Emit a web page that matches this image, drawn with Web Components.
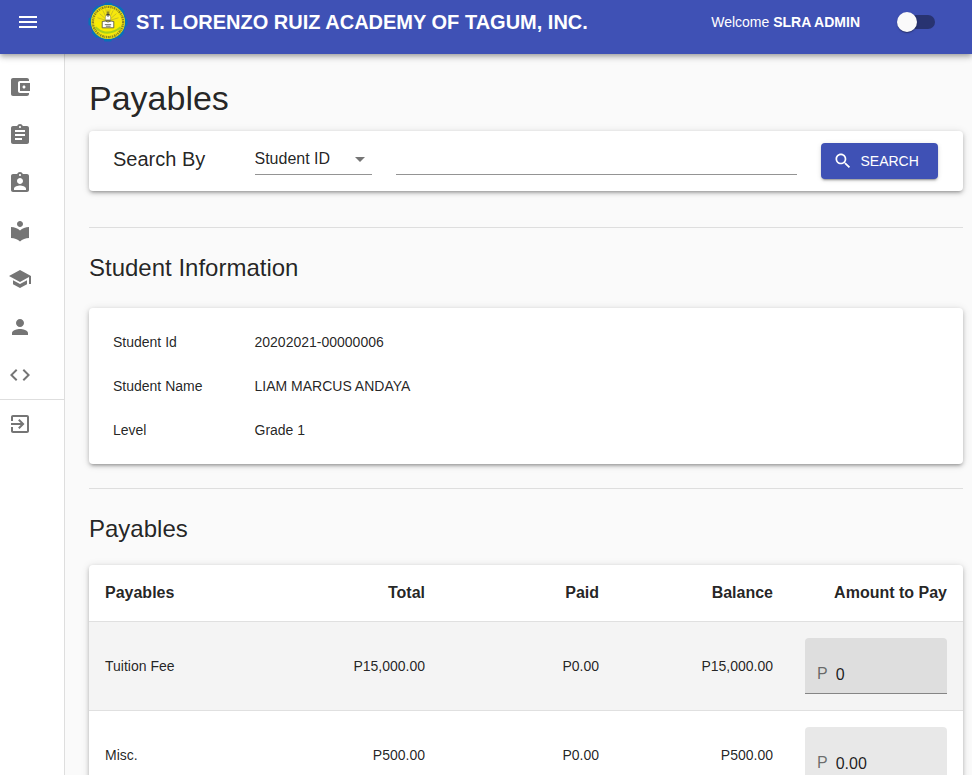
<!DOCTYPE html>
<html lang="en">
<head>
<meta charset="utf-8">
<meta name="viewport" content="width=device-width, initial-scale=1">
<title>Payables</title>
<style>
html { scrollbar-width: none; }
body { margin: 0; background: #fafafa; color: rgba(0,0,0,.87); font: 14px/20px "Liberation Sans", Arial, sans-serif; }
</style>
</head>
<body>
<school-app></school-app>

<template id="t-app">
<style>
:host { display: flex; flex-direction: column; min-height: 100vh; }
app-header { position: sticky; top: 0; z-index: 2; }
.body { display: flex; flex: 1; }
main { flex: 1; min-width: 0; padding: 24px 9px 24px 24px; }
h1 { margin: 0 0 12px; font-size: 34px; line-height: 41px; font-weight: 400; }
h2 { margin: 24px 0; font-size: 24px; line-height: 32px; font-weight: 400; }
h2.table-title { margin-bottom: 20px; }
hr { margin: 24px 0; border: 0; height: 1px; background: #dedede; }
hr.wide { margin-top: 36px; }
</style>
<app-header user="SLRA ADMIN">ST. LORENZO RUIZ ACADEMY OF TAGUM, INC.</app-header>
<div class="body">
  <side-nav></side-nav>
  <main>
    <h1>Payables</h1>
    <paper-card><search-form></search-form></paper-card>
    <hr class="wide">
    <h2>Student Information</h2>
    <paper-card><student-info></student-info></paper-card>
    <hr>
    <h2 class="table-title">Payables</h2>
    <paper-card><payables-table></payables-table></paper-card>
  </main>
</div>
</template>

<template id="t-header">
<style>
:host { display: flex; align-items: center; box-sizing: border-box; min-height: 54px; padding: 0 37px 10px 16px; background: #3f51b5; color: #fff;
  box-shadow: 0 2px 4px -1px rgba(0,0,0,.2), 0 4px 5px rgba(0,0,0,.14), 0 1px 10px rgba(0,0,0,.12); }
button { border: 0; padding: 0; margin-right: 48px; background: none; color: inherit; display: flex; cursor: pointer; }
school-crest { margin-right: 8px; }
.title { flex: 1; font-size: 20px; line-height: 32px; font-weight: 700; white-space: nowrap; }
.welcome { margin-right: 37px; white-space: nowrap; }
input { appearance: none; position: relative; flex: none; margin: 0; width: 38px; height: 20px; cursor: pointer; }
input::before { content: ""; position: absolute; left: 4px; right: 0; top: 3px; height: 14px; border-radius: 7px; background: #283371; }
input::after { content: ""; position: absolute; left: 0; top: 0; width: 20px; height: 20px; border-radius: 50%; background: #fafafa;
  box-shadow: 0 2px 1px -1px rgba(0,0,0,.2), 0 1px 1px rgba(0,0,0,.14), 0 1px 3px rgba(0,0,0,.12); }
input:checked::after { left: 18px; }
</style>
<button type="button" aria-label="Open menu"><ui-icon name="menu"></ui-icon></button>
<school-crest></school-crest>
<span class="title"><slot></slot></span>
<span class="welcome">Welcome <b></b></span>
<input type="checkbox" role="switch" aria-label="Dark mode">
</template>

<template id="t-crest">
<style>:host { display: block; width: 40px; height: 40px; flex: none; } svg { display: block; }</style>
<svg width="40" height="40" viewBox="-19 -19 38 38" aria-hidden="true">
  <circle r="17.4" fill="#0871b8"/>
  <circle r="17.4" fill="none" stroke="#0871b8" stroke-width="2.4" stroke-dasharray="7 6.66" stroke-dashoffset="3.5"/>
  <circle r="16.2" fill="#f2e514"/>
  <circle r="14.4" fill="none" stroke="#8d861c" stroke-width="2.2" stroke-dasharray="1.3 .7 .8 .6 1.6 .8"/>
  <circle r="12.4" fill="#f7e80c"/>
  <g stroke="#b9b02c" stroke-width=".7">
    <path d="M0-1L-5-11M0-1L-8-8M0-1L-10-4M0-1L5-11M0-1L8-8M0-1L10-4M0-1V-12M0-1L-2-12M0-1L2-12"/>
  </g>
  <path d="M-12 2C-8-2 -4-1 0 0S8-2 12 2C10 9 5 12 0 12S-10 9-12 2z" fill="#f9ed00"/>
  <path d="M-12 5Q-8 9-3 10Q5 11 12 5" fill="none" stroke="#a6cf1e" stroke-width="2"/>
  <path d="M-2.5-2V-5L0-8L2.5-5V-2z" fill="#fff" stroke="#84813b" stroke-width=".5"/>
  <path d="M0-10V-5M-1.5-7H1.5" stroke="#41413a" stroke-width="1"/>
  <path d="M-5.5-.5Q-2.5-1.5 0 0Q3-1.5 5.5-.5V5.5H-5.5z" fill="#fff" stroke="#51513d" stroke-width=".8"/>
  <path d="M-3 2.5H3M-2 4H2.5M-2.5-1.5H2.5" stroke="#6a695b" stroke-width=".9"/>
</svg>
</template>

<template id="t-nav">
<style>
:host { display: block; flex: none; box-sizing: border-box; width: 65px; padding-top: 9px; background: #fff; border-right: 1px solid #dedede; color: #757575; }
nav { display: flex; flex-direction: column; position: sticky; top: 63px; }
a { display: flex; align-items: center; height: 48px; padding-left: 8px; color: inherit; }
hr { width: 100%; margin: 0; border: 0; height: 1px; background: #dedede; }
</style>
<nav aria-label="Main">
  <a href="#payments" aria-label="Payments"><ui-icon name="wallet"></ui-icon></a>
  <a href="#assessments" aria-label="Assessments"><ui-icon name="assignment"></ui-icon></a>
  <a href="#enrollment" aria-label="Enrollment"><ui-icon name="assignmentInd"></ui-icon></a>
  <a href="#subjects" aria-label="Subjects"><ui-icon name="library"></ui-icon></a>
  <a href="#students" aria-label="Students"><ui-icon name="school"></ui-icon></a>
  <a href="#users" aria-label="Users"><ui-icon name="person"></ui-icon></a>
  <a href="#developer" aria-label="Developer"><ui-icon name="code"></ui-icon></a>
  <hr>
  <a href="#logout" aria-label="Log out"><ui-icon name="exit"></ui-icon></a>
</nav>
</template>

<template id="t-card">
<style>
:host { display: block; background: #fff; border-radius: 4px; overflow: hidden;
  box-shadow: 0 3px 3px -2px rgba(0,0,0,.2), 0 2px 4px rgba(0,0,0,.2), 0 1px 8px rgba(0,0,0,.12); }
</style><slot></slot>
</template>

<template id="t-search">
<style>
:host { display: block; padding: 12px 25px 12px 24px; }
form { display: grid; grid-template-columns: repeat(12, minmax(0, 1fr)); column-gap: 24px; align-items: start; }
label { grid-column: span 2; font-size: 20px; line-height: 32px; white-space: nowrap; }
.pick { grid-column: span 2; display: grid; align-items: center; }
.pick > * { grid-area: 1 / 1; }
.pick ui-icon { justify-self: end; color: #757575; pointer-events: none; }
select, input { appearance: none; box-sizing: border-box; width: 100%; height: 32px; margin: 0; padding: 0; border: 0; border-bottom: 1px solid #949494; border-radius: 0; background: none; color: inherit; font: inherit; font-size: 16px; outline: 0; }
input { grid-column: span 6; }
button { grid-column: span 2; display: flex; align-items: center; gap: 8px; height: 36px; padding: 0 12px; border: 0; border-radius: 4px; background: #3f51b5; color: #fff; font: inherit; cursor: pointer;
  box-shadow: 0 3px 1px -2px rgba(0,0,0,.2), 0 2px 2px rgba(0,0,0,.14), 0 1px 5px rgba(0,0,0,.12); }
button ui-icon { --size: 20px; }
</style>
<form>
  <label for="by">Search By</label>
  <div class="pick">
    <select id="by"><option>Student ID</option><option>Name</option></select>
    <ui-icon name="drop"></ui-icon>
  </div>
  <input type="text" aria-label="Search text">
  <button type="button"><ui-icon name="search"></ui-icon>SEARCH</button>
</form>
</template>

<template id="t-info">
<style>
:host { display: block; padding: 24px 25px 24px 24px; }
dl { display: grid; grid-template-columns: repeat(12, minmax(0, 1fr)); gap: 24px; margin: 0; }
dt { grid-column: span 2; white-space: nowrap; }
dd { grid-column: span 10; margin: 0; }
</style>
<dl>
  <dt>Student Id</dt><dd>20202021-00000006</dd>
  <dt>Student Name</dt><dd>LIAM MARCUS ANDAYA</dd>
  <dt>Level</dt><dd>Grade 1</dd>
</dl>
</template>

<template id="t-table">
<style>
:host { display: block; }
table { width: 100%; table-layout: fixed; border-collapse: separate; border-spacing: 0; }
col.num { width: 174px; }
th, td { padding: 16px; border-bottom: 1px solid #e0e0e0; text-align: right; }
th { font-size: 16px; line-height: 24px; font-weight: 700; white-space: nowrap; }
th:first-child, td:first-child { text-align: left; }
tr.active { background: #f4f4f4; }
</style>
<table>
  <colgroup><col><col class="num"><col class="num"><col class="num"><col class="num"></colgroup>
  <thead><tr><th scope="col">Payables</th><th scope="col">Total</th><th scope="col">Paid</th><th scope="col">Balance</th><th scope="col">Amount to Pay</th></tr></thead>
  <tbody>
    <tr class="active"><td>Tuition Fee</td><td>P15,000.00</td><td>P0.00</td><td>P15,000.00</td><td><amount-field label="Tuition Fee amount" value="0"></amount-field></td></tr>
    <tr><td>Misc.</td><td>P500.00</td><td>P0.00</td><td>P500.00</td><td><amount-field label="Misc. amount" value="0.00"></amount-field></td></tr>
  </tbody>
</table>
</template>

<template id="t-amount">
<style>
:host { display: flex; box-sizing: border-box; height: 56px; padding: 25px 12px 9px; gap: 8px; background: rgba(0,0,0,.09); border-bottom: 1px solid #858585; border-radius: 4px 4px 0 0; font-size: 16px; line-height: 21px; }
label { color: rgba(0,0,0,.54); }
input { flex: 1; min-width: 0; width: 0; margin: 0; padding: 1px 0 0; border: 0; background: none; color: inherit; font: inherit; outline: 0; }
</style>
<label for="amount">P</label><input id="amount" type="text" inputmode="decimal">
</template>

<script>
const ICONS = {
  menu: 'M3 18h18v-2H3v2zm0-5h18v-2H3v2zm0-7v2h18V6H3z',
  wallet: 'M21 18v1c0 1.1-.9 2-2 2H5c-1.11 0-2-.9-2-2V5c0-1.1.89-2 2-2h14c1.1 0 2 .9 2 2v1h-9c-1.11 0-2 .9-2 2v8c0 1.1.89 2 2 2h9zm-9-2h10V8H12v8zm4-2.5c-.83 0-1.5-.67-1.5-1.5s.67-1.5 1.5-1.5 1.5.67 1.5 1.5-.67 1.5-1.5 1.5z',
  assignment: 'M19 3h-4.18C14.4 1.84 13.3 1 12 1c-1.3 0-2.4.84-2.82 2H5c-1.1 0-2 .9-2 2v14c0 1.1.9 2 2 2h14c1.1 0 2-.9 2-2V5c0-1.1-.9-2-2-2zm-7 0c.55 0 1 .45 1 1s-.45 1-1 1-1-.45-1-1 .45-1 1-1zm2 14H7v-2h7v2zm3-4H7v-2h10v2zm0-4H7V7h10v2z',
  assignmentInd: 'M19 3h-4.18C14.4 1.84 13.3 1 12 1c-1.3 0-2.4.84-2.82 2H5c-1.1 0-2 .9-2 2v14c0 1.1.9 2 2 2h14c1.1 0 2-.9 2-2V5c0-1.1-.9-2-2-2zm-7 0c.55 0 1 .45 1 1s-.45 1-1 1-1-.45-1-1 .45-1 1-1zm0 4c1.66 0 3 1.34 3 3s-1.34 3-3 3-3-1.34-3-3 1.34-3 3-3zm6 12H6v-1.4c0-2 4-3.1 6-3.1s6 1.1 6 3.1V19z',
  library: 'M12 11.55C9.64 9.35 6.48 8 3 8v11c3.48 0 6.64 1.35 9 3.55 2.36-2.19 5.52-3.55 9-3.55V8c-3.48 0-6.64 1.35-9 3.55zM12 8c1.66 0 3-1.34 3-3s-1.34-3-3-3-3 1.34-3 3 1.34 3 3 3z',
  school: 'M5 13.18v4L12 21l7-3.82v-4L12 17l-7-3.82zM12 3L1 9l11 6 9-4.91V17h2V9L12 3z',
  person: 'M12 12c2.21 0 4-1.79 4-4s-1.79-4-4-4-4 1.79-4 4 1.79 4 4 4zm0 2c-2.67 0-8 1.34-8 4v2h16v-2c0-2.66-5.33-4-8-4z',
  code: 'M9.4 16.6L4.8 12l4.6-4.6L8 6l-6 6 6 6 1.4-1.4zm5.2 0l4.6-4.6-4.6-4.6L16 6l6 6-6 6-1.4-1.4z',
  exit: 'M10.09 15.59L11.5 17l5-5-5-5-1.41 1.41L12.67 11H3v2h9.67l-2.58 2.59zM19 3H5c-1.11 0-2 .9-2 2v4h2V5h14v14H5v-4H3v4c0 1.1.89 2 2 2h14c1.1 0 2-.9 2-2V5c0-1.1-.9-2-2-2z',
  search: 'M15.5 14h-.79l-.28-.27C15.41 12.59 16 11.11 16 9.5 16 5.91 13.09 3 9.5 3S3 5.91 3 9.5 5.91 16 9.5 16c1.61 0 3.09-.59 4.23-1.57l.27.28v.79l5 4.99L20.49 19l-4.99-5zm-6 0C7.01 14 5 11.99 5 9.5S7.01 5 9.5 5 14 7.01 14 9.5 11.99 14 9.5 14z',
  drop: 'M7 10l5 5 5-5z'
};

class UiIcon extends HTMLElement {
  constructor() { super(); this.attachShadow({ mode: 'open' }); }
  connectedCallback() {
    this.shadowRoot.innerHTML = `<style>:host{display:block;flex:none;width:var(--size,24px);height:var(--size,24px)}svg{display:block;width:100%;height:100%;fill:currentColor}</style><svg viewBox="0 0 24 24" aria-hidden="true"><path d="${ICONS[this.getAttribute('name')]}"/></svg>`;
  }
}
customElements.define('ui-icon', UiIcon);

class TemplateElement extends HTMLElement {
  constructor() {
    super();
    const source = document.getElementById(this.constructor.template);
    this.attachShadow({ mode: 'open' }).append(document.importNode(source.content, true));
  }
}
class SchoolCrest extends TemplateElement { static template = 't-crest'; }
class PaperCard extends TemplateElement { static template = 't-card'; }
class SideNav extends TemplateElement { static template = 't-nav'; }
class SearchForm extends TemplateElement { static template = 't-search'; }
class StudentInfo extends TemplateElement { static template = 't-info'; }
class PayablesTable extends TemplateElement { static template = 't-table'; }
class SchoolApp extends TemplateElement { static template = 't-app'; }
class AppHeader extends TemplateElement {
  static template = 't-header';
  connectedCallback() { this.shadowRoot.querySelector('b').textContent = this.getAttribute('user'); }
}
class AmountField extends TemplateElement {
  static template = 't-amount';
  connectedCallback() {
    const input = this.shadowRoot.querySelector('input');
    input.value = this.getAttribute('value');
    input.setAttribute('aria-label', this.getAttribute('label'));
  }
}
customElements.define('school-crest', SchoolCrest);
customElements.define('paper-card', PaperCard);
customElements.define('app-header', AppHeader);
customElements.define('side-nav', SideNav);
customElements.define('search-form', SearchForm);
customElements.define('student-info', StudentInfo);
customElements.define('amount-field', AmountField);
customElements.define('payables-table', PayablesTable);
customElements.define('school-app', SchoolApp);
</script>
</body>
</html>
